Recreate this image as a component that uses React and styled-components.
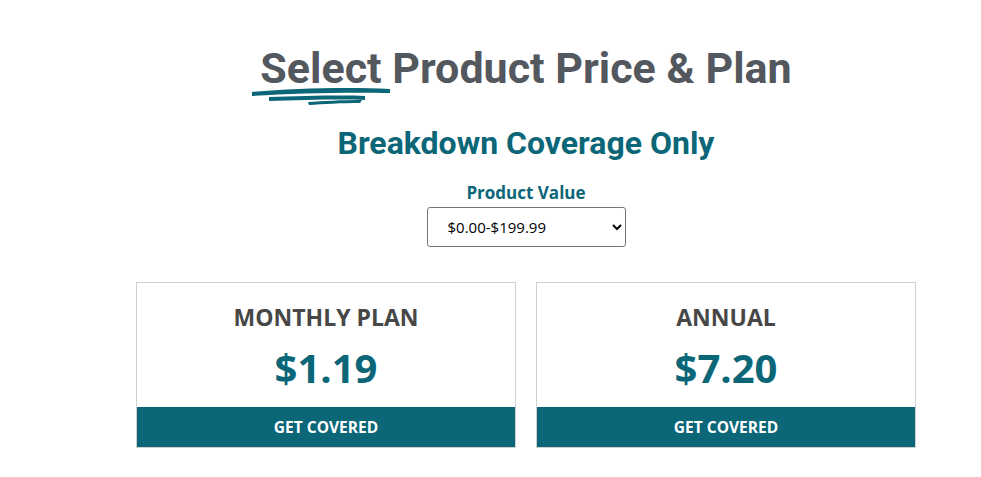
import React, { useState } from 'react';
import styled, { createGlobalStyle } from 'styled-components';

const GlobalStyle = createGlobalStyle`
  html, body {
    margin: 0;
    padding: 0;
    background: #fff;
  }
  body {
    font-family: 'Open Sans', 'Liberation Sans', sans-serif;
  }
`;

const TEAL = '#0b6678';

const plans = [
  { name: 'MONTHLY PLAN', price: '$1.19' },
  { name: 'ANNUAL', price: '$7.20' },
];

const App = () => {
  const [value, setValue] = useState('0');

  return (
    <>
      <GlobalStyle />
      <Page>
        <Title>
          <Marked>
            Select
            <Brush viewBox="0 0 138 18">
              <path d="M0 5 C 40 1, 100 0, 138 2 L 138 6 C 100 5, 40 6, 0 9 Z" fill={TEAL} />
              <path d="M17 10 C 50 9, 90 8, 113 9 L 113 13 C 90 12, 50 13, 17 14 Z" fill={TEAL} />
              <path d="M56 15 C 70 14, 90 13, 110 13 L 108 16 C 90 16, 70 17, 57 18 Z" fill={TEAL} />
            </Brush>
          </Marked>{' '}
          Product Price &amp; Plan
        </Title>
        <Subtitle>Breakdown Coverage Only</Subtitle>
        <Field>
          <Label htmlFor="product-value">Product Value</Label>
          <Select id="product-value" value={value} onChange={e => setValue(e.target.value)}>
            <option value="0">$0.00-$199.99</option>
            <option value="1">$200.00-$499.99</option>
            <option value="2">$500.00-$999.99</option>
          </Select>
        </Field>
        <Cards>
          { plans.map(plan => (
            <Card key={plan.name}>
              <PlanName>{ plan.name }</PlanName>
              <Price>{ plan.price }</Price>
              <CoverButton>GET COVERED</CoverButton>
            </Card>
          )) }
        </Cards>
      </Page>
    </>
  );
};

export default App;

const Page = styled.div`
  width: 780px;
  margin-left: 136px;
  display: flex;
  flex-direction: column;
  align-items: center;
`;

const Title = styled.h1`
  margin: 40px 0 0;
  font-family: Roboto, 'Liberation Sans', sans-serif;
  font-weight: 700;
  font-size: 43px;
  line-height: 56px;
  color: #53575e;
`;

const Marked = styled.span`
  position: relative;
  display: inline-block;
`;

const Brush = styled.svg`
  position: absolute;
  left: -8px;
  top: 47px;
  width: 138px;
  height: 18px;
`;

const Subtitle = styled.h2`
  margin: 27px 0 0;
  font-family: Roboto, 'Liberation Sans', sans-serif;
  font-weight: 700;
  font-size: 32px;
  line-height: 40px;
  color: ${TEAL};
`;

const Field = styled.div`
  margin-top: 18px;
  display: flex;
  flex-direction: column;
  align-items: center;
`;

const Label = styled.label`
  font-weight: 700;
  font-size: 17px;
  line-height: 24px;
  color: ${TEAL};
`;

const Select = styled.select`
  margin-top: 2px;
  width: 199px;
  height: 40px;
  padding: 0 8px 0 16px;
  border: 1px solid #767676;
  border-radius: 3px;
  background: #fff;
  font-family: 'Open Sans', 'Liberation Sans', sans-serif;
  font-size: 15px;
  color: #000;
`;

const Cards = styled.div`
  margin-top: 35px;
  width: 100%;
  display: grid;
  grid-template-columns: 1fr 1fr;
  gap: 20px;
`;

const Card = styled.div`
  border: 1px solid #cfcfcf;
  display: flex;
  flex-direction: column;
  align-items: center;
`;

const PlanName = styled.div`
  margin-top: 17px;
  font-weight: 700;
  font-size: 23px;
  line-height: 34px;
  color: #474747;
`;

const Price = styled.div`
  margin-top: 6px;
  font-weight: 700;
  font-size: 40px;
  line-height: 56px;
  color: ${TEAL};
`;

const CoverButton = styled.button`
  margin-top: 11px;
  width: 100%;
  height: 40px;
  border: none;
  background: ${TEAL};
  color: #fff;
  font-family: 'Open Sans', 'Liberation Sans', sans-serif;
  font-weight: 700;
  font-size: 15.5px;
  cursor: pointer;
`;
